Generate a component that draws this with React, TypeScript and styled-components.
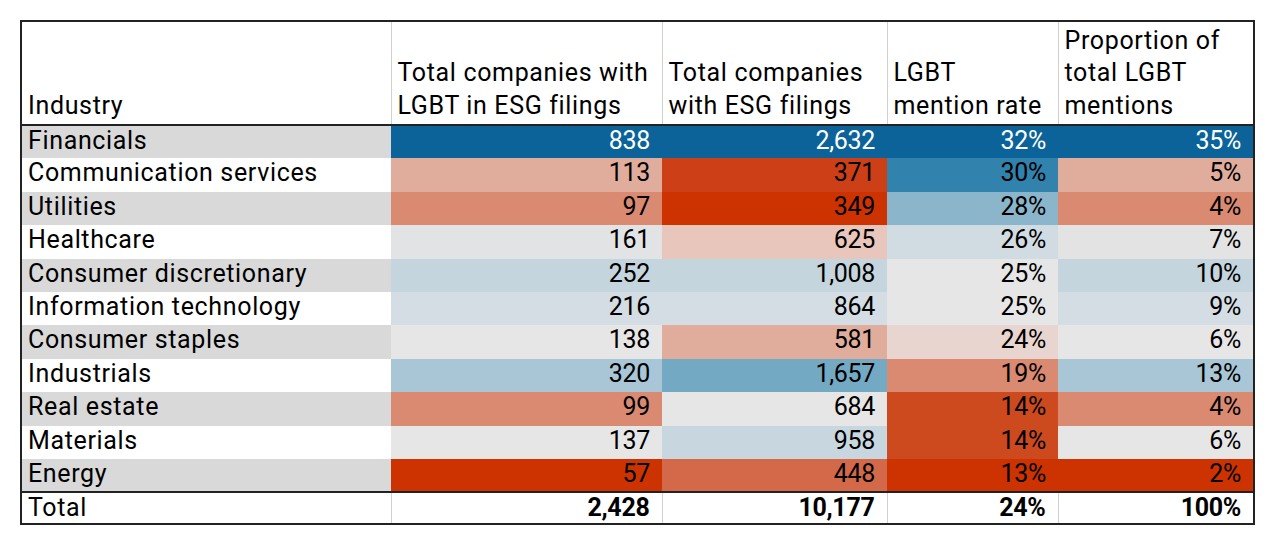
import React from "react";
import styled, { createGlobalStyle } from "styled-components";

const GlobalStyle = createGlobalStyle`
  body {
    margin: 0;
    background: #ffffff;
    font-family: Roboto, "Liberation Sans", sans-serif;
  }
`;

const Page = styled.div`
  padding: 20px 0 0 20px;
`;

const Table = styled.table`
  border-collapse: collapse;
  table-layout: fixed;
  width: 1233px;
  border: 2px solid #222;
  color: #000;
  font-size: 25px;
`;

const HeadCell = styled.th<{ $first?: boolean }>`
  height: 100px;
  padding: 0 6px 2px 6px;
  text-align: left;
  vertical-align: bottom;
  font-weight: 400;
  line-height: 32.5px;
  letter-spacing: 0.65px;
  border-left: ${(p) => (p.$first ? "none" : "1px solid #d0d0d0")};
  border-bottom: 2px solid #222;
`;

const Row = styled.tr`
  height: 33.4px;
`;

const NameCell = styled.td<{ $shade: boolean }>`
  padding: 0 6px 0 6px;
  vertical-align: top;
  line-height: 30px;
  white-space: nowrap;
  letter-spacing: 0.65px;
  background: ${(p) => (p.$shade ? "#d9d9d9" : "#ffffff")};
`;

const ValueCell = styled.td<{ $bg: string; $light?: boolean }>`
  padding: 0 12px 0 8px;
  vertical-align: top;
  line-height: 30px;
  text-align: right;
  letter-spacing: -0.3px;
  background: ${(p) => p.$bg};
  color: ${(p) => (p.$light ? "#ffffff" : "#000")};
`;

const TotalRow = styled.tr`
  height: 32px;
  border-top: 2px solid #222;
`;

const TotalCell = styled.td<{ $num?: boolean }>`
  padding: 0 12px 0 6px;
  vertical-align: top;
  line-height: 30px;
  text-align: ${(p) => (p.$num ? "right" : "left")};
  font-weight: ${(p) => (p.$num ? 700 : 400)};
  letter-spacing: ${(p) => (p.$num ? "-0.3px" : "0.65px")};
  border-left: ${(p) => (p.$num ? "1px solid #d0d0d0" : "none")};
`;

const widths = [370, 271, 225, 171, 196];

const headers = [
  "Industry",
  "Total companies with LGBT in ESG filings",
  "Total companies with ESG filings",
  "LGBT mention rate",
  "Proportion of total LGBT mentions",
];

type Cell = [string, string];

const rows: { name: string; cells: Cell[] }[] = [
  { name: "Financials", cells: [["838", "#0b6399"], ["2,632", "#0b6399"], ["32%", "#0b6399"], ["35%", "#0b6399"]] },
  { name: "Communication services", cells: [["113", "#e0ad9c"], ["371", "#cc3f17"], ["30%", "#3182ad"], ["5%", "#e0ad9c"]] },
  { name: "Utilities", cells: [["97", "#d98a71"], ["349", "#cc3300"], ["28%", "#8ab5cb"], ["4%", "#d98a71"]] },
  { name: "Healthcare", cells: [["161", "#e2e3e5"], ["625", "#e8c6bc"], ["26%", "#d0dbe2"], ["7%", "#e3e3e3"]] },
  { name: "Consumer discretionary", cells: [["252", "#c4d5de"], ["1,008", "#c4d5de"], ["25%", "#e6e6e6"], ["10%", "#c4d5de"]] },
  { name: "Information technology", cells: [["216", "#d3dde3"], ["864", "#d3dde3"], ["25%", "#e6e6e6"], ["9%", "#d3dde3"]] },
  { name: "Consumer staples", cells: [["138", "#e6e6e6"], ["581", "#e0ad9c"], ["24%", "#e8d5d0"], ["6%", "#e6e6e6"]] },
  { name: "Industrials", cells: [["320", "#a8c6d5"], ["1,657", "#74a9c3"], ["19%", "#d98a71"], ["13%", "#a8c6d5"]] },
  { name: "Real estate", cells: [["99", "#d98a71"], ["684", "#e6e6e6"], ["14%", "#cd4a1f"], ["4%", "#d98a71"]] },
  { name: "Materials", cells: [["137", "#e6e6e6"], ["958", "#c8d7df"], ["14%", "#cd4a1f"], ["6%", "#e6e6e6"]] },
  { name: "Energy", cells: [["57", "#cc3300"], ["448", "#d4694a"], ["13%", "#cc3300"], ["2%", "#cc3300"]] },
];

const totals = ["2,428", "10,177", "24%", "100%"];

export default function App() {
  return (
    <Page>
      <GlobalStyle />
      <Table>
        <colgroup>
          {widths.map((w, i) => (
            <col key={i} style={{ width: w }} />
          ))}
        </colgroup>
        <thead>
          <tr>
            {headers.map((h, i) => (
              <HeadCell key={h} $first={i === 0}>
                {h}
              </HeadCell>
            ))}
          </tr>
        </thead>
        <tbody>
          {rows.map((r, i) => (
            <Row key={r.name}>
              <NameCell $shade={i % 2 === 0}>{r.name}</NameCell>
              {r.cells.map(([v, bg], j) => (
                <ValueCell key={j} $bg={bg} $light={bg === "#0b6399"}>
                  {v}
                </ValueCell>
              ))}
            </Row>
          ))}
          <TotalRow>
            <TotalCell>Total</TotalCell>
            {totals.map((t) => (
              <TotalCell key={t} $num>
                {t}
              </TotalCell>
            ))}
          </TotalRow>
        </tbody>
      </Table>
    </Page>
  );
}
